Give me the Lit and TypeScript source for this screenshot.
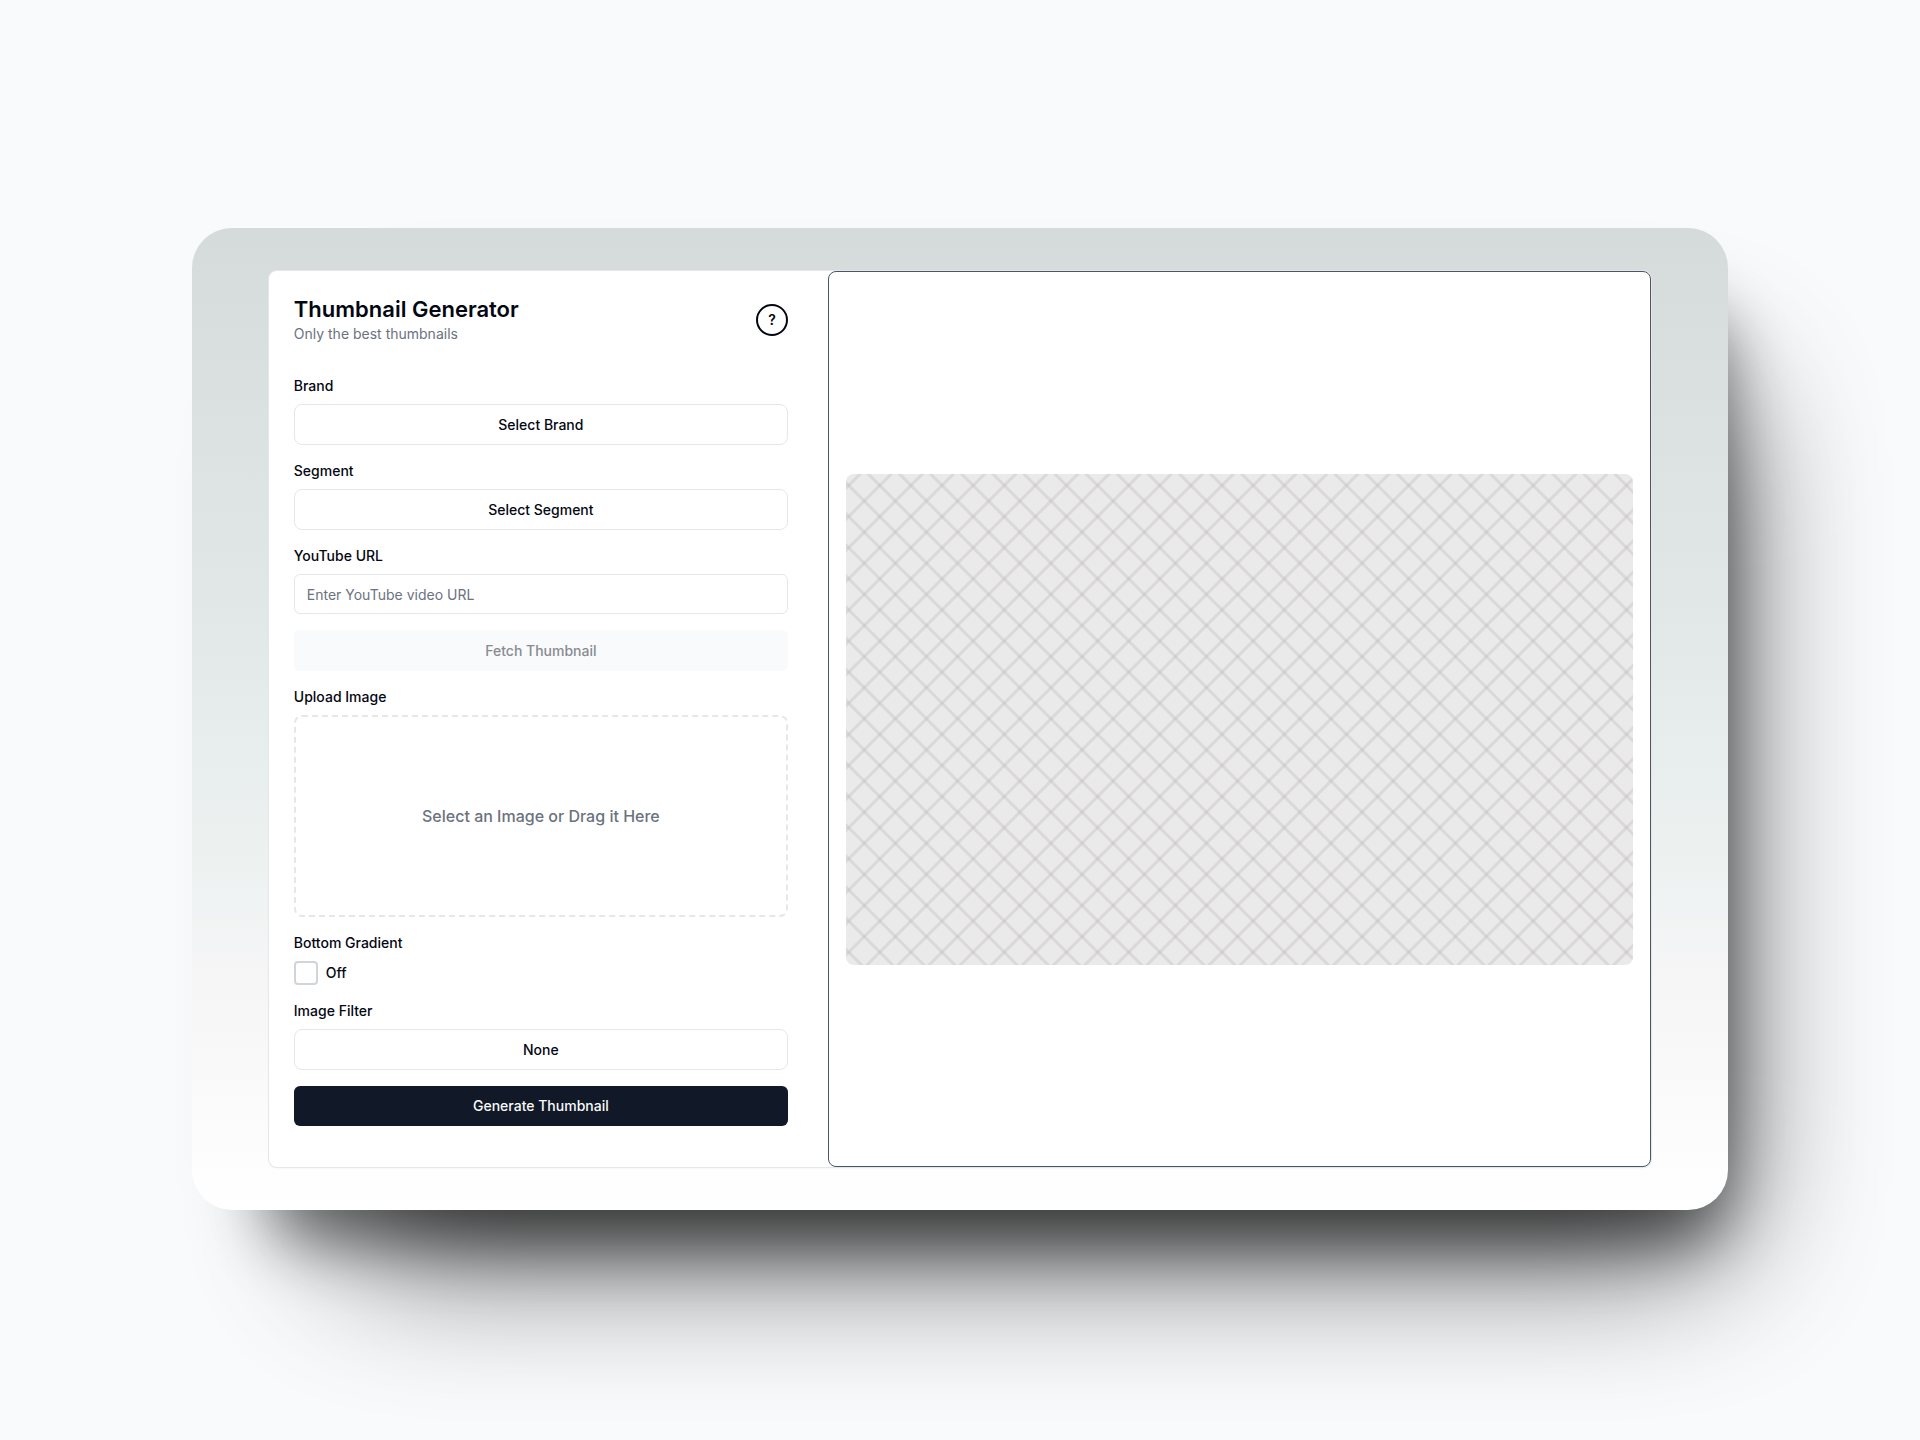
import { LitElement, html, css } from "lit";
import { customElement, state } from "lit/decorators.js";

@customElement("app-root")
export class AppRoot extends LitElement {
  static styles = css`
    :host {
      display: block;
      font-family: Inter, "Liberation Sans", sans-serif;
      font-size: 14px;
      line-height: 20px;
      color: #030712;
      --line: #e5e7eb;
      --muted: #6b7280;
    }
    * {
      box-sizing: border-box;
    }
    .page {
      min-height: 100vh;
      padding: 0 10% 2px;
      display: flex;
      align-items: center;
      background: #f8fafc;
      overflow: hidden;
      isolation: isolate;
    }
    .stage {
      position: relative;
      flex: 1;
      min-width: 0;
      padding: 43px 5%;
      border-radius: 40px;
      background: linear-gradient(#d5dbda, #e2e7e8 40%, #edf2f1 65%, #f5f5f6 75%, #fff);
    }
    /* Two soft layers cast the shadow down and to the right. */
    .stage::before,
    .stage::after {
      content: "";
      position: absolute;
      z-index: -1;
      border-radius: 40px;
      background: #000;
    }
    .stage::before {
      inset: 84px 3px -33px 76px;
      opacity: 0.5;
      filter: blur(32px);
    }
    .stage::after {
      inset: 160px 4px -42px 154px;
      opacity: 0.7;
      filter: blur(77px);
    }
    .card {
      display: grid;
      grid-template-columns: 559fr 823fr;
      border-radius: 8px;
      background: #fff;
      box-shadow: 0 0 0 1px var(--line), 0 1px 2px rgba(0, 0, 0, 0.08);
    }
    .form {
      display: flex;
      flex-direction: column;
      gap: 16px;
      padding: 24px 40px 41px 25px;
      margin: 0;
    }
    .head {
      display: flex;
      justify-content: space-between;
      align-items: center;
      padding-bottom: 16px;
    }
    h1 {
      margin: 0;
      font-size: 22px;
      line-height: 28px;
      font-weight: 600;
    }
    .sub {
      margin: 0;
      line-height: 21px;
      color: var(--muted);
    }
    .help {
      width: 32px;
      height: 32px;
      padding: 0;
      border: 2px solid #030712;
      border-radius: 50%;
      background: #fff;
      color: inherit;
      font: 600 14px/20px Inter, sans-serif;
    }
    .field {
      display: flex;
      flex-direction: column;
      gap: 8px;
    }
    .label {
      font-weight: 500;
    }
    .btn,
    .input {
      width: 100%;
      height: 41px;
      padding: 0 12px;
      border: 1px solid var(--line);
      border-radius: 8px;
      background: #fff;
      color: inherit;
      font: 500 14px/20px Inter, sans-serif;
    }
    .input {
      height: 40px;
      border-radius: 6px;
      font-weight: 400;
    }
    .input::placeholder {
      color: var(--muted);
      opacity: 1;
    }
    .btn.fetch {
      border: 0;
      border-radius: 6px;
      background: #f9fafb;
      color: #888b91;
    }
    .btn.primary {
      height: 40px;
      border: 0;
      border-radius: 6px;
      background: #111827;
      color: #f9fafb;
    }
    .drop {
      display: flex;
      align-items: center;
      justify-content: center;
      height: 202px;
      border: 2px dashed var(--line);
      border-radius: 8px;
      color: var(--muted);
      font-size: 16px;
      font-weight: 500;
    }
    .file {
      position: absolute;
      width: 1px;
      height: 1px;
      opacity: 0;
    }
    .check {
      display: flex;
      align-items: center;
      gap: 8px;
      height: 24px;
      font-weight: 500;
    }
    .box {
      appearance: none;
      width: 24px;
      height: 24px;
      margin: 0;
      border: 2px solid #d1d5db;
      border-radius: 4px;
      background: #fff;
    }
    .box:checked {
      background: #111827;
    }
    .preview {
      display: flex;
      align-items: center;
      padding: 16px 17px;
      border: 1px solid #4b5563;
      border-radius: 8px;
      background: #fff;
    }
    .canvas {
      --stripe: rgba(190, 184, 186, 0.36);
      flex: 1;
      height: 491px;
      border-radius: 8px;
      background:
        repeating-linear-gradient(45deg, transparent 0 9px, var(--stripe) 10px 12px, transparent 13px 22px),
        repeating-linear-gradient(135deg, transparent 0 8px, var(--stripe) 9px 11px, transparent 12px 22px),
        #eaeaea;
    }
  `;

  @state() private gradient = false;

  private toggle(e: Event) {
    this.gradient = (e.target as HTMLInputElement).checked;
  }

  render() {
    return html`
      <main class="page">
        <div class="stage">
          <div class="card">
            <form class="form" @submit=${(e: Event) => e.preventDefault()}>
              <header class="head">
                <div>
                  <h1>Thumbnail Generator</h1>
                  <p class="sub">Only the best thumbnails</p>
                </div>
                <button class="help" type="button">?</button>
              </header>
              <div class="field">
                <label class="label" for="brand">Brand</label>
                <button class="btn" id="brand" type="button">Select Brand</button>
              </div>
              <div class="field">
                <label class="label" for="segment">Segment</label>
                <button class="btn" id="segment" type="button">Select Segment</button>
              </div>
              <div class="field">
                <label class="label" for="url">YouTube URL</label>
                <input class="input" id="url" type="text" placeholder="Enter YouTube video URL" />
              </div>
              <button class="btn fetch" type="button" disabled>Fetch Thumbnail</button>
              <div class="field">
                <label class="label" for="image">Upload Image</label>
                <label class="drop" for="image">Select an Image or Drag it Here</label>
                <input class="file" id="image" type="file" accept="image/*" />
              </div>
              <div class="field">
                <span class="label" id="gradient-label">Bottom Gradient</span>
                <label class="check">
                  <input class="box" type="checkbox" aria-describedby="gradient-label"
                    .checked=${this.gradient} @change=${this.toggle} />
                  ${this.gradient ? "On" : "Off"}
                </label>
              </div>
              <div class="field">
                <label class="label" for="filter">Image Filter</label>
                <button class="btn" id="filter" type="button">None</button>
              </div>
              <button class="btn primary" type="submit">Generate Thumbnail</button>
            </form>
            <section class="preview">
              <div class="canvas"></div>
            </section>
          </div>
        </div>
      </main>
    `;
  }
}
